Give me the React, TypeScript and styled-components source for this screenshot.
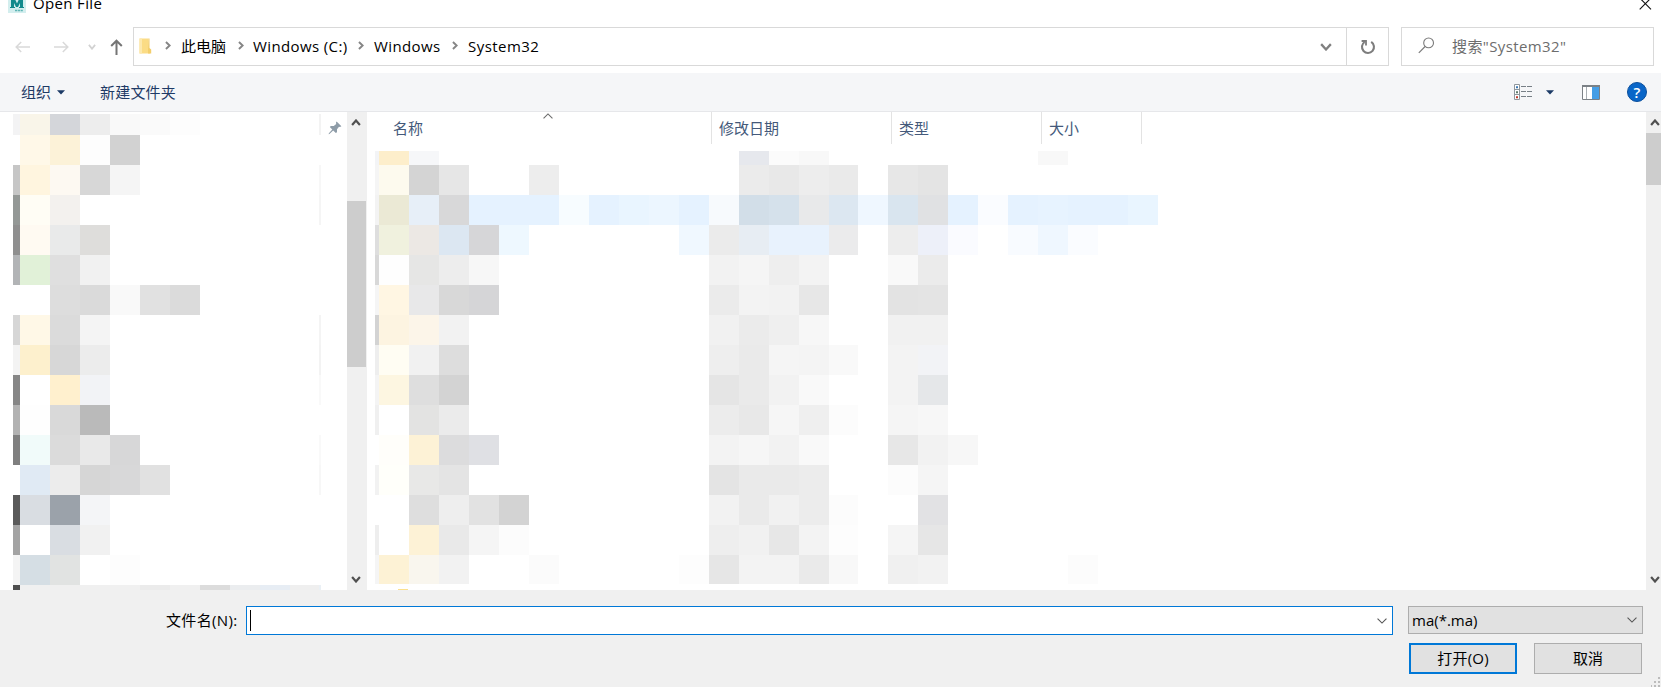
import React from 'react';
import styled, { createGlobalStyle } from 'styled-components';

const GlobalStyle = createGlobalStyle`
  * { box-sizing: border-box; }
  body {
    margin: 0;
    background: #fff;
    font-family: "Open Sans", "Noto Sans CJK SC", sans-serif;
    font-size: 15px;
    color: #000;
    overflow: hidden;
  }
  svg { display: block; flex: none; }
`;

const Dialog = styled.div`
  width: 1661px;
  height: 687px;
  display: flex;
  flex-direction: column;
  background: #fff;
  overflow: hidden;
`;

const TitleBar = styled.header`
  height: 27px;
  flex: none;
  display: flex;
  padding: 0 9px 0 8px;
  justify-content: space-between;
`;

const TitleGroup = styled.div`
  display: flex;
  gap: 7px;
`;

const AppIcon = styled.div`
  width: 18px;
  height: 13px;
  background: #d3eeee;
  overflow: hidden;
`;

const Label = styled.span<{ $w?: number; $color?: string; $track?: number }>`
  display: block;
  white-space: nowrap;
  line-height: 20px;
  color: ${(p) => p.$color ?? '#000'};
  width: ${(p) => (p.$w ? `${p.$w}px` : 'auto')};
  letter-spacing: ${(p) => p.$track ?? 0}px;
`;

const TitleText = styled(Label)`
  margin-top: -7px;
`;

const NavBar = styled.nav`
  height: 46px;
  flex: none;
  display: flex;
  align-items: flex-start;
`;

const NavButtons = styled.div`
  width: 133px;
  height: 39px;
  display: flex;
  align-items: center;
  padding-left: 15px;
`;

const NavSlot = styled.div<{ $w: number }>`
  width: ${(p) => p.$w}px;
`;

const AddressBar = styled.div`
  width: 1256px;
  height: 39px;
  border: 1px solid #d9d9d9;
  display: flex;
  align-items: center;
`;

const Crumbs = styled.div`
  flex: 1;
  display: flex;
  align-items: center;
  padding: 0 0 2px 5px;
`;

const CrumbChevron = styled.div<{ $before: number; $after: number }>`
  margin: 0 ${(p) => p.$after}px 0 ${(p) => p.$before}px;
`;

const DropSlot = styled.div`
  width: 41px;
  display: flex;
  justify-content: center;
`;

const RefreshSlot = styled.div`
  width: 42px;
  height: 37px;
  border-left: 1px solid #d9d9d9;
  display: flex;
  align-items: center;
  justify-content: center;
`;

const SearchBox = styled.div`
  width: 253px;
  height: 39px;
  margin-left: 12px;
  border: 1px solid #d9d9d9;
  display: flex;
  align-items: center;
  padding: 0 0 2px 16px;
  gap: 17px;
`;

const Toolbar = styled.div`
  height: 39px;
  flex: none;
  background: #f5f6f8;
  border-bottom: 1px solid #e6e7ea;
  display: flex;
  align-items: center;
  padding: 0 14px 0 21px;
`;

const ToolButton = styled.div<{ $gap?: number; $ml?: number }>`
  display: flex;
  align-items: center;
  gap: ${(p) => p.$gap ?? 0}px;
  margin-left: ${(p) => p.$ml ?? 0}px;
`;

const Spacer = styled.div`
  flex: 1;
`;

const HelpBadge = styled.div`
  width: 20px;
  height: 20px;
  margin-left: 27px;
  border-radius: 50%;
  background: #0a66c8;
  border: 1px solid #0b4f9c;
  color: #fff;
  font-weight: 600;
  font-size: 15px;
  line-height: 18px;
  text-align: center;
`;

const Content = styled.main`
  height: 478px;
  flex: none;
  display: flex;
  overflow: hidden;
`;

const Sidebar = styled.aside`
  width: 347px;
  display: flex;
  padding: 2px 0 0 13px;
`;

const PinSlot = styled.div`
  padding: 7px 0 0 7px;
`;

const Scrollbar = styled.div<{ $w: number }>`
  width: ${(p) => p.$w}px;
  flex: none;
  overflow: hidden;
  background: #f0f0f0;
  display: flex;
  flex-direction: column;
`;

const ScrollArrow = styled.div<{ $h: number }>`
  height: ${(p) => p.$h}px;
  flex: none;
  padding-left: 4px;
  display: flex;
  align-items: center;
`;

const ScrollThumb = styled.div<{ $h: number; $top: number }>`
  height: ${(p) => p.$h}px;
  width: 19px;
  margin-top: ${(p) => p.$top}px;
  background: #cdcdcd;
`;

const FilePane = styled.section`
  flex: 1;
  min-width: 0;
  overflow: hidden;
`;

const ColumnHeader = styled.div`
  height: 32px;
  display: flex;
`;

const Column = styled.div<{ $w: number; $pad: number }>`
  width: ${(p) => p.$w}px;
  padding: 6px 0 0 ${(p) => p.$pad}px;
  border-right: 1px solid #e3e3e3;
  position: relative;
`;

const SortMark = styled.div`
  position: absolute;
  top: 1px;
  left: 176px;
`;

const FileRows = styled.div`
  padding: 7px 0 0 8px;
`;

const MosaicRow = styled.div<{ $h: number }>`
  display: flex;
  height: ${(p) => p.$h}px;
`;

const Cell = styled.div<{ $c: string; $w: number }>`
  width: ${(p) => p.$w}px;
  flex: none;
  background: ${(p) => p.$c};
`;

const FolderTip = styled.div`
  width: 10px;
  height: 2px;
  margin: 5px 0 0 23px;
  background: #fbe08c;
`;

const Footer = styled.footer`
  flex: 1;
  background: #f0f0f0;
  padding: 16px 18px 0 0;
  position: relative;
`;

const FieldRow = styled.div`
  display: flex;
  align-items: flex-start;
`;

const FieldLabel = styled.div`
  width: 246px;
  padding: 4px 0 0 166px;
`;

const FileNameInput = styled.div`
  width: 1147px;
  height: 29px;
  border: 1px solid #0078d7;
  background: #fff;
  display: flex;
  align-items: center;
  justify-content: space-between;
  padding: 0 5px 0 3px;
`;

const Caret = styled.div`
  width: 1px;
  height: 21px;
  background: #000;
`;

const TypeSelect = styled.div`
  width: 235px;
  height: 28px;
  margin-left: 15px;
  border: 1px solid #adadad;
  background: #e1e1e1;
  display: flex;
  align-items: center;
  justify-content: space-between;
  padding: 0 5px 0 3px;
`;

const Actions = styled.div`
  display: flex;
  justify-content: flex-end;
  gap: 17px;
  margin-top: 8px;
  padding-right: 1px;
`;

const ActionButton = styled.div<{ $primary?: boolean }>`
  width: 108px;
  height: 31px;
  display: flex;
  align-items: center;
  justify-content: center;
  padding-bottom: 2px;
  background: #e1e1e1;
  border: ${(p) => (p.$primary ? '2px solid #0078d7' : '1px solid #adadad')};
`;

const Grip = styled.div`
  position: absolute;
  right: 0;
  bottom: 0;
`;

// Each row: leading edge colour, then "column:colour" entries. Two digits stand for a grey.
const sidebarRows: [number, string, string, string][] = [
  [21, 'f3f3f4', '0:f9f5e9 1:d4d6da 2:ed 3:f9 4:fa 5:fd', 'f3'],
  [30, 'ff', '0:fff8e8 1:fcf2d8 2:fd 3:d2', 'ff'],
  [30, 'c6', '0:fff5df 1:fdf9f2 2:d7 3:f5', 'f7'],
  [30, '949896', '0:fffdf5 1:f3f1ee', 'f5'],
  [30, '8f', '0:fffaf2 1:e9eaea 2:dedddb', 'ff'],
  [30, 'b2b4b6', '0:e1f1d8 1:df 2:f1', 'ff'],
  [30, 'ff', '1:dd 2:da 3:f9 4:e1 5:db', 'ff'],
  [30, 'd6', '0:fff8e7 1:db 2:f4', 'f4'],
  [30, 'f3', '0:fdf0cd 1:d7 2:ec', 'f3'],
  [30, '86', '1:fff0ce 2:f2f3f6', 'f9'],
  [30, 'b2', '0:fe 1:d9 2:ba', 'ff'],
  [30, '7f', '0:f1fbfa 1:db 2:e9 3:d7d7d8', 'f9'],
  [30, 'ff', '0:e0eaf4 1:ec 2:d6 3:d8d8d9 4:e1', 'f7'],
  [30, '5a', '0:d9dde2 1:9ba2aa 2:f4f5f7', 'ff'],
  [30, 'a3', '1:d9dde2 2:f1', 'ff'],
  [30, 'f4', '0:d5dee4 1:e1e3e2 3:fd', 'ff'],
  [6, '4f', '0:f0 1:f0 2:f0 3:f0 4:eb 5:f0 6:dc 7:ebedef 8:e7edf4 9:ef', 'eaf0f5'],
];

const fileRows: [number, string, string][] = [
  [14, 'f3f4f6', '0:fdeecb 1:f6f7f9 12:e6e8ed 13:fb 14:f8 22:f8'],
  [30, 'f5', '0:fdfaee 1:d4 2:e6 5:ed 12:eb 13:e8 14:ed 15:ea 17:e7 18:e4'],
  [30, 'f3', '0:ebe9d5 1:e7eff8 2:d8d8d9 3:e5f2ff 4:e5f2ff 5:e5f2ff 6:f7fcff 7:e5f2ff 8:e9f5ff 9:ecf6ff 10:e5f2ff 11:f7fafd 12:d2dee8 13:d5e1eb 14:e8e9ea 15:dce7f1 16:eff7ff 17:d9e5ef 18:e0e1e3 19:e5f2ff 20:fafcff 21:e5f2ff 22:e7f3ff 23:e5f2ff 24:e5f2ff 25:e9f5ff'],
  [30, 'de', '0:f0f1de 1:ece8e4 2:dce7f2 3:d6d6d8 4:eef8ff 10:f0f8ff 11:eb 12:e7edf3 13:e8f2fd 14:e8f2fd 15:ebebec 17:ed 18:edf0f9 19:fafbff 21:f8fbff 22:eff7ff 23:fafcff'],
  [30, 'd8', '0:fe 1:e6e6e5 2:ed 3:f7 11:f2 12:f5 13:ee 14:f3 17:f9 18:eb'],
  [30, 'f5', '0:fff6e3 1:e8e8e9 2:d8 3:d5d5d7 11:eb 12:f3 13:f2 14:e7 17:e3 18:e4'],
  [30, 'd3', '0:fdf4e1 1:fcf5e9 2:f2 11:f1 12:eb 13:ef 14:f7 17:f1 18:f1'],
  [30, 'ee', '0:fffdf3 1:f1 2:dd 11:ee 12:ea 13:f5 14:f4 15:f9 17:f3 18:f2f3f6'],
  [30, 'f4', '0:fdf6e1 1:de 2:d3 11:e5 12:ea 13:f2 14:f9 17:f3 18:e5e7e9'],
  [30, 'f0', '1:e3e3e2 2:eb 11:ec 12:e8 13:f6 14:ef 15:fc 17:f5 18:f7'],
  [30, 'ff', '0:fffefa 1:fdf2d6 2:dcdcdd 3:dfe0e4 11:f3 12:f6 13:f2 14:f9 17:e7 18:f2 19:f7'],
  [30, 'f2', '0:fffffa 1:e8e8e7 2:e4 11:e4 12:ea 13:ea 14:ec 17:fc 18:f5'],
  [30, 'ff', '1:de 2:ee 3:e2 4:d3 11:f2 12:ea 13:f1 14:ec 15:fc 18:e2e2e4'],
  [30, 'ee', '1:fdf2d6 2:e9 3:f5 4:fc 11:ee 12:f1 13:e7 14:f3 15:fd 17:f5 18:e6'],
  [29, 'f5', '0:fdf2d5 1:f9f6ee 2:f2 5:fb 10:fd 11:e6 12:f3 13:f3 14:ea 15:f8 17:f0 18:f2 23:fc'],
];

const hex = (c: string) => (c.length === 2 ? `#${c}${c}${c}` : `#${c}`);

function expand(spec: string, count: number): string[] {
  const out = new Array<string>(count).fill('transparent');
  spec.split(' ').forEach((part) => {
    const [i, c] = part.split(':');
    out[Number(i)] = hex(c);
  });
  return out;
}

function Chevron({ w, h, dir, color, sw }: { w: number; h: number; dir: 'up' | 'down' | 'right'; color: string; sw: number }) {
  const m = sw / 2;
  const pts = {
    up: `${m},${h - m} ${w / 2},${m + 0.4} ${w - m},${h - m}`,
    down: `${m},${m} ${w / 2},${h - m - 0.4} ${w - m},${m}`,
    right: `${m},${m} ${w - m - 0.4},${h / 2} ${m},${h - m}`,
  }[dir];
  return (
    <svg width={w} height={h} viewBox={`0 0 ${w} ${h}`}>
      <polyline points={pts} fill="none" stroke={color} strokeWidth={sw} />
    </svg>
  );
}

function Triangle() {
  return (
    <svg width="8" height="5" viewBox="0 0 8 5">
      <path d="M0 0.3H8L4 4.6Z" fill="#1b3a66" />
    </svg>
  );
}

function Separator({ before, after }: { before: number; after: number }) {
  return (
    <CrumbChevron $before={before} $after={after}>
      <Chevron w={6} h={9} dir="right" color="#858585" sw={1.9} />
    </CrumbChevron>
  );
}

export default function App() {
  return (
    <>
      <GlobalStyle />
      <Dialog>
        <TitleBar>
          <TitleGroup>
            <AppIcon>
              <svg width="18" height="13" viewBox="0 0 18 13">
                <path d="M3 8V-2H6.5L9 3.5L11.5 -2H15V8H12V3L10 7H8L6 3V8Z" fill="#138a8c" />
                <path d="M2 7.5H7M11 7.5H16" stroke="#138a8c" strokeWidth="1.2" />
                <path d="M7 10.5H15" stroke="#5fb5b5" strokeWidth="1.6" strokeDasharray="2.2 .6" />
              </svg>
            </AppIcon>
            <TitleText $track={0.35}>Open File</TitleText>
          </TitleGroup>
          <svg width="13" height="10" viewBox="0 0 13 10">
            <path d="M.7 -2L12 9.3M12 -2L.7 9.3" stroke="#111" strokeWidth="1.1" />
          </svg>
        </TitleBar>

        <NavBar>
          <NavButtons>
            <NavSlot $w={38}>
              <svg width="16" height="12" viewBox="0 0 16 12">
                <path d="M15 6H1.5M6.2 1L1.2 6L6.2 11" fill="none" stroke="#d9d9d9" strokeWidth="1.5" />
              </svg>
            </NavSlot>
            <NavSlot $w={35}>
              <svg width="16" height="12" viewBox="0 0 16 12">
                <path d="M1 6H14.5M9.8 1L14.8 6L9.8 11" fill="none" stroke="#d9d9d9" strokeWidth="1.5" />
              </svg>
            </NavSlot>
            <NavSlot $w={22}>
              <Chevron w={8} h={6} dir="down" color="#d2d2d2" sw={1.8} />
            </NavSlot>
            <svg width="13" height="17" viewBox="0 0 13 17">
              <path d="M6.5 17V3M1.2 8L6.5 2.7L11.8 8" fill="none" stroke="#757575" strokeWidth="2" />
            </svg>
          </NavButtons>
          <AddressBar>
            <Crumbs>
              <svg width="13" height="18" viewBox="0 0 13 18">
                <path d="M0.5 1.5H9.5V12L11 13V16.5H0.5Z" fill="#fbdc85" />
                <path d="M9.5 1.5H10.5V11L12.2 12.5V16.5H9V13Z" fill="#f3ce6c" />
                <path d="M0.5 1.5H3V16.5H0.5Z" fill="#fde9ae" />
              </svg>
              <Separator before={13} after={10} />
              <Label $w={45}>此电脑</Label>
              <Separator before={12} after={9} />
              <Label $w={94} $track={0.38}>Windows (C:)</Label>
              <Separator before={11} after={10} />
              <Label $w={67} $track={0.38}>Windows</Label>
              <Separator before={11} after={10} />
              <Label $track={0.45}>System32</Label>
            </Crumbs>
            <DropSlot>
              <Chevron w={12} h={8} dir="down" color="#808080" sw={2.3} />
            </DropSlot>
            <RefreshSlot>
              <svg width="16" height="16" viewBox="0 0 16 16">
                <path d="M11.2 2.9A6 6 0 1 1 4.6 3" fill="none" stroke="#7d7d7d" strokeWidth="2.1" />
                <path d="M1.6 2H6V6.6" fill="none" stroke="#7d7d7d" strokeWidth="1.8" />
              </svg>
            </RefreshSlot>
          </AddressBar>
          <SearchBox>
            <svg width="17" height="17" viewBox="0 0 17 17">
              <circle cx="10.6" cy="5.9" r="4.9" fill="none" stroke="#7b7b7b" strokeWidth="1.1" />
              <path d="M7.1 9.5L.8 15.8" stroke="#7b7b7b" strokeWidth="1.2" />
            </svg>
            <Label $color="#6d6d6d" $track={0.4}>搜索"System32"</Label>
          </SearchBox>
        </NavBar>

        <Toolbar>
          <ToolButton $gap={6}>
            <Label $color="#1e3a66">组织</Label>
            <Triangle />
          </ToolButton>
          <ToolButton $ml={35}>
            <Label $color="#1e3a66" $track={0.2}>新建文件夹</Label>
          </ToolButton>
          <Spacer />
          <ToolButton $gap={13}>
            <svg width="19" height="16" viewBox="0 0 19 16">
              <path d="M.5 .5H5.5V15.5H.5ZM.5 5.5H5.5M.5 10.5H5.5" fill="#fff" stroke="#8f979d" />
              <path d="M2 2.2h2v2h-2z" fill="#3b79b5" />
              <path d="M2 7.2h2v2h-2z" fill="#5e7a6a" />
              <path d="M2 12.2h2v2h-2z" fill="#c0392b" />
              <path d="M7 2.5H12M13 2.5H18M7 7.5H12M13 7.5H18M7 12.5H12M13 12.5H18" stroke="#777f86" />
            </svg>
            <Triangle />
          </ToolButton>
          <ToolButton $ml={28}>
            <svg width="18" height="15" viewBox="0 0 18 15">
              <path d="M.5 .5H17.5V14.5H.5Z" fill="#fff" stroke="#7b8186" />
              <path d="M0 1H18" stroke="#7b8186" strokeWidth="2" />
              <path d="M4.5 2V14" stroke="#a9afb4" />
              <path d="M10 2H17V14H10Z" fill="#459ee6" />
            </svg>
          </ToolButton>
          <HelpBadge>?</HelpBadge>
        </Toolbar>

        <Content>
          <Sidebar>
            <div>
              {sidebarRows.map(([h, edge, spec, end], i) => (
                <MosaicRow key={i} $h={h}>
                  <Cell $w={7} $c={hex(edge)} />
                  {expand(spec, 10).map((c, j) => (
                    <Cell key={j} $w={j === 9 ? 29 : 30} $c={c} />
                  ))}
                  <Cell $w={2} $c={hex(end)} />
                </MosaicRow>
              ))}
            </div>
            <PinSlot>
              <svg width="14" height="14" viewBox="0 0 14 14">
                <path d="M8.6 .6L13.4 5.2L12 6L11 5.8L9 8.2L9 11.2L7.8 12L5.2 9.4L1.4 13L.6 13.2L.9 12.3L4.3 8.5L1.8 6L2.8 5L5.8 5L8.2 3L8 1.6Z" fill="#8e9ca8" />
              </svg>
            </PinSlot>
          </Sidebar>
          <Scrollbar $w={20}>
            <ScrollArrow $h={21}>
              <Chevron w={10} h={7} dir="up" color="#505050" sw={2.2} />
            </ScrollArrow>
            <ScrollThumb $top={68} $h={166} />
            <Spacer />
            <ScrollArrow $h={22}>
              <Chevron w={10} h={7} dir="down" color="#505050" sw={2.2} />
            </ScrollArrow>
          </Scrollbar>
          <FilePane>
            <ColumnHeader>
              <Column $w={345} $pad={26}>
                <Label $color="#44597a">名称</Label>
                <SortMark>
                  <Chevron w={10} h={6} dir="up" color="#6b6b6b" sw={1.1} />
                </SortMark>
              </Column>
              <Column $w={180} $pad={7}>
                <Label $color="#44597a">修改日期</Label>
              </Column>
              <Column $w={150} $pad={7}>
                <Label $color="#44597a">类型</Label>
              </Column>
              <Column $w={100} $pad={7}>
                <Label $color="#44597a">大小</Label>
              </Column>
            </ColumnHeader>
            <FileRows>
              {fileRows.map(([h, edge, spec], i) => (
                <MosaicRow key={i} $h={h}>
                  <Cell $w={4} $c={hex(edge)} />
                  {expand(spec, 26).map((c, j) => (
                    <Cell key={j} $w={j === 15 ? 29 : 30} $c={c} />
                  ))}
                </MosaicRow>
              ))}
              <FolderTip />
            </FileRows>
          </FilePane>
          <Scrollbar $w={15}>
            <ScrollArrow $h={21}>
              <Chevron w={10} h={7} dir="up" color="#505050" sw={2.2} />
            </ScrollArrow>
            <ScrollThumb $top={0} $h={52} />
            <Spacer />
            <ScrollArrow $h={22}>
              <Chevron w={10} h={7} dir="down" color="#505050" sw={2.2} />
            </ScrollArrow>
          </Scrollbar>
        </Content>

        <Footer>
          <FieldRow>
            <FieldLabel>
              <Label $track={0.35}>文件名(N):</Label>
            </FieldLabel>
            <FileNameInput>
              <Caret />
              <Chevron w={10} h={6} dir="down" color="#555" sw={1.1} />
            </FileNameInput>
            <TypeSelect>
              <Label>ma(*.ma)</Label>
              <Chevron w={10} h={6} dir="down" color="#555" sw={1.1} />
            </TypeSelect>
          </FieldRow>
          <Actions>
            <ActionButton $primary>
              <Label $track={0.2}>打开(O)</Label>
            </ActionButton>
            <ActionButton>
              <Label>取消</Label>
            </ActionButton>
          </Actions>
          <Grip>
            <svg width="10" height="10" viewBox="0 0 10 10">
              <path d="M7 0h2v2h-2zM3 4h2v2h-2zM7 4h2v2h-2zM0 8h1v2h-1zM3 8h2v2h-2zM7 8h2v2h-2z" fill="#bcbcbc" />
            </svg>
          </Grip>
        </Footer>
      </Dialog>
    </>
  );
}
